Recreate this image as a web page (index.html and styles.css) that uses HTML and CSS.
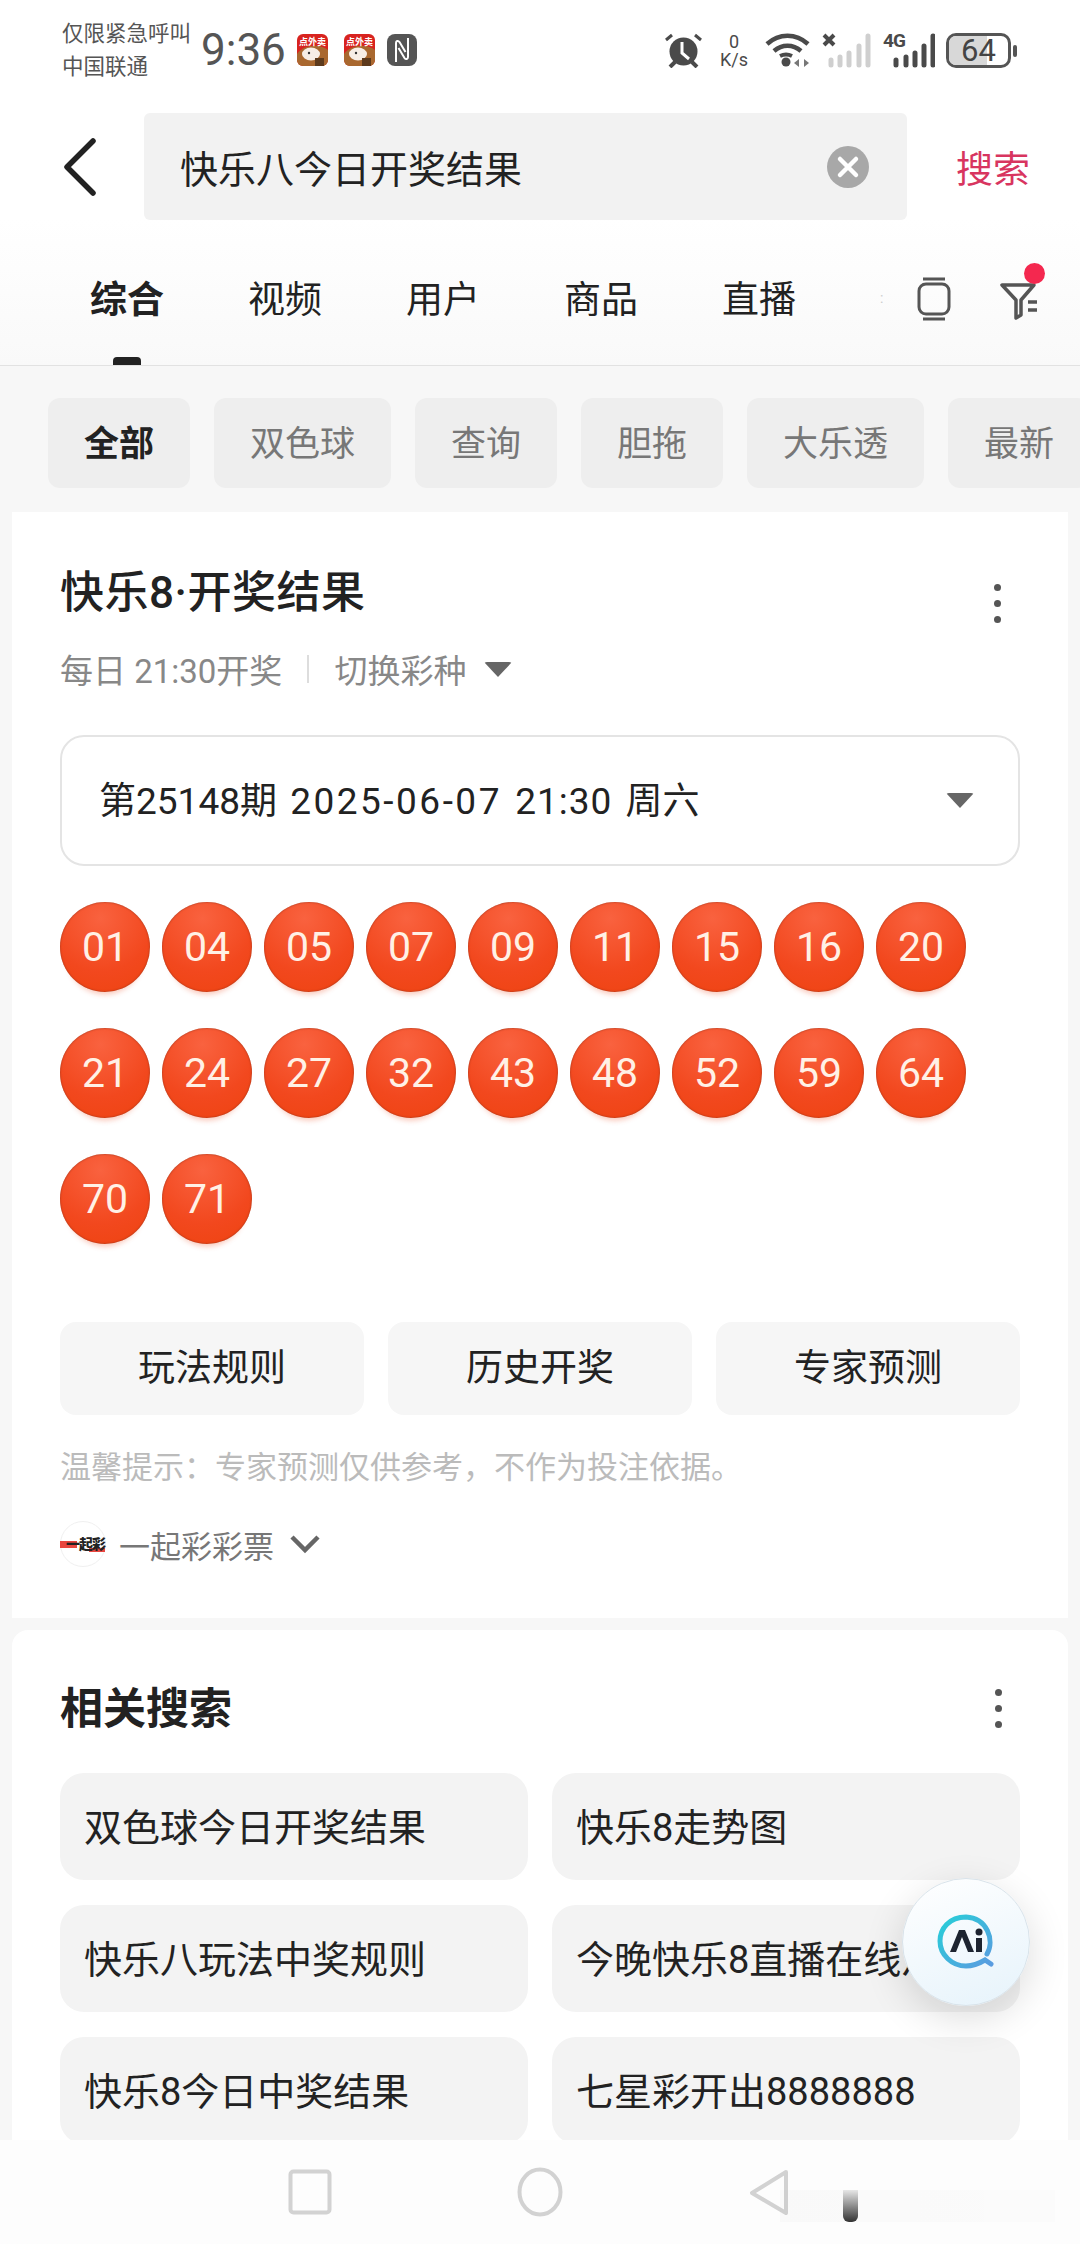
FILE: index.html
```html
<!DOCTYPE html>
<html lang="zh-CN">
<head>
    <meta charset="UTF-8">
    <meta name="viewport" content="width=device-width, initial-scale=1.0">
    <title>快乐八今日开奖结果</title>
    <link rel="stylesheet" href="styles.css">
</head>
<body>
    <div class="phone">
        <div class="top-area">
            <div class="status-bar">
                <div class="carrier">
                    <span>仅限紧急呼叫</span>
                    <span>中国联通</span>
                </div>
                <div class="clock">9:36</div>
                <svg class="app-icon" width="31" height="32" viewBox="0 0 31 32">
                    <rect width="31" height="32" rx="6" fill="#d8231f"/>
                    <path d="M0 20c6-9 22-11 31-4v10a6 6 0 0 1-6 6H6a6 6 0 0 1-6-6z" fill="#a9682f"/>
                    <ellipse cx="14" cy="20" rx="9" ry="6.5" fill="#f7eee6"/>
                    <rect x="18" y="24" width="9" height="8" fill="#5d3a1c"/>
                    <circle cx="12" cy="19" r="1.2" fill="#333"/>
                    <text x="15.5" y="11" text-anchor="middle" class="app-label">点外卖</text>
                </svg>
                <svg class="app-icon" width="31" height="32" viewBox="0 0 31 32">
                    <rect width="31" height="32" rx="6" fill="#d8231f"/>
                    <path d="M0 20c6-9 22-11 31-4v10a6 6 0 0 1-6 6H6a6 6 0 0 1-6-6z" fill="#a9682f"/>
                    <ellipse cx="14" cy="20" rx="9" ry="6.5" fill="#f7eee6"/>
                    <rect x="18" y="24" width="9" height="8" fill="#5d3a1c"/>
                    <circle cx="12" cy="19" r="1.2" fill="#333"/>
                    <text x="15.5" y="11" text-anchor="middle" class="app-label">点外卖</text>
                </svg>
                <svg class="nfc" width="30" height="32" viewBox="0 0 30 32">
                    <rect width="30" height="32" rx="8" fill="#555"/>
                    <path d="M9 28V9c0-2 2-3 3.500-1l6 10M21 4v19c0 2-2 3-3.500 1l-6-10" fill="none" stroke="#fff" stroke-width="2"/>
                </svg>
                <div class="status-right">
                    <svg width="37" height="35" viewBox="0 0 37 35">
                        <circle cx="18.500" cy="18.500" r="14" fill="#4a4a4a"/>
                        <path d="M17 9v11l7 6" fill="none" stroke="#fff" stroke-width="3"/>
                        <path d="M1 7l6-5M36 7l-6-5" stroke="#4a4a4a" stroke-width="3"/>
                        <path d="M5 34l5-5M32 34l-5-5" stroke="#4a4a4a" stroke-width="4"/>
                    </svg>
                    <div class="speed"><b>0</b><span>K/s</span></div>
                    <svg class="wifi" width="45" height="35" viewBox="0 0 45 35">
                        <path d="M2 11c12-11 29-11 41 0M9 18c8-7 19-7 27 0" fill="none" stroke="#4a4a4a" stroke-width="4.500"/>
                        <circle cx="21" cy="29" r="4.500" fill="#4a4a4a"/>
                        <path d="M15 23c4-2 8-2 12 0" fill="none" stroke="#4a4a4a" stroke-width="4"/>
                        <path d="M29 30l5-4v8zM39 26l5 4-5 4z" fill="#777"/>
                    </svg>
                    <svg class="no-sim" width="50" height="35" viewBox="0 0 50 35">
                        <path d="M2 2l10 10M12 2L2 12" stroke="#4a4a4a" stroke-width="4"/>
                        <g stroke="#cfcfcf" stroke-width="5" stroke-linecap="round">
                            <path d="M9 27v5M18 24v8M27 20v12M37 13v19M46 3v29"/>
                        </g>
                    </svg>
                    <div class="signal">
                        <span>4G</span>
                        <svg width="44" height="35" viewBox="0 0 44 35">
                            <g stroke="#4a4a4a" stroke-width="5" stroke-linecap="round">
                                <path d="M5 27v5M15 24v8M24 20v12M33 13v19M42 3v29"/>
                            </g>
                        </svg>
                    </div>
                    <div class="battery">
                        <div class="battery-body"><div class="battery-fill"></div><span>64</span></div>
                        <div class="battery-tip"></div>
                    </div>
                </div>
            </div>
            <div class="search-row">
                <svg class="back" width="36" height="60" viewBox="0 0 36 60">
                    <path d="M31 4L5 30l26 26" fill="none" stroke="#222" stroke-width="5.500" stroke-linecap="round" stroke-linejoin="round"/>
                </svg>
                <div class="search-box">
                    <span class="query">快乐八今日开奖结果</span>
                    <svg width="42" height="42" viewBox="0 0 42 42">
                        <circle cx="21" cy="21" r="21" fill="#a8a8a8"/>
                        <path d="M13 13l16 16M29 13L13 29" stroke="#fff" stroke-width="4.500" stroke-linecap="round"/>
                    </svg>
                </div>
                <div class="search-btn">搜索</div>
            </div>
            <div class="tabs">
                <div class="tab active">综合</div>
                <div class="tab">视频</div>
                <div class="tab">用户</div>
                <div class="tab">商品</div>
                <div class="tab">直播</div>
                <div class="tab-more">:</div>
                <div class="tab-tools">
                    <svg width="34" height="44" viewBox="0 0 34 44">
                        <rect x="2" y="7" width="30" height="30" rx="7" fill="none" stroke="#555" stroke-width="3"/>
                        <path d="M6 2h22M6 42h22" stroke="#555" stroke-width="3"/>
                    </svg>
                    <div class="filter">
                        <svg width="40" height="38" viewBox="0 0 40 38">
                            <path d="M2 3h32L21 18v15l-5 3V18z" fill="none" stroke="#555" stroke-width="3.500" stroke-linejoin="round"/>
                            <path d="M28 20h9M28 28h9" stroke="#555" stroke-width="3.500"/>
                        </svg>
                        <i class="red-dot"></i>
                    </div>
                </div>
            </div>
        </div>

        <div class="chips">
            <div class="chip active">全部</div>
            <div class="chip">双色球</div>
            <div class="chip">查询</div>
            <div class="chip">胆拖</div>
            <div class="chip">大乐透</div>
            <div class="chip">最新</div>
        </div>

        <div class="content">
            <div class="card result-card">
                <div class="card-head">
                    <h2>快乐8·开奖结果</h2>
                    <div class="dots"><i></i><i></i><i></i></div>
                </div>
                <div class="draw-time">
                    <span>每日 21:30开奖</span>
                    <em></em>
                    <span>切换彩种</span>
                    <i class="caret"></i>
                </div>
                <div class="period">
                    <span>第25148期 <span class="period-date">2025-06-07</span> <span class="period-time">21:30</span> 周六</span>
                    <i class="caret"></i>
                </div>
                <div class="balls">
                    <div class="ball">01</div><div class="ball">04</div><div class="ball">05</div>
                    <div class="ball">07</div><div class="ball">09</div><div class="ball">11</div>
                    <div class="ball">15</div><div class="ball">16</div><div class="ball">20</div>
                    <div class="ball">21</div><div class="ball">24</div><div class="ball">27</div>
                    <div class="ball">32</div><div class="ball">43</div><div class="ball">48</div>
                    <div class="ball">52</div><div class="ball">59</div><div class="ball">64</div>
                    <div class="ball">70</div><div class="ball">71</div>
                </div>
                <div class="actions">
                    <div class="action">玩法规则</div>
                    <div class="action">历史开奖</div>
                    <div class="action">专家预测</div>
                </div>
                <div class="tip">温馨提示：专家预测仅供参考，不作为投注依据。</div>
                <div class="source">
                    <div class="source-logo"><i></i><u></u><span>一起彩</span></div>
                    <span>一起彩彩票</span>
                    <svg width="32" height="20" viewBox="0 0 32 20">
                        <path d="M3 3l13 13L29 3" fill="none" stroke="#666" stroke-width="4.500"/>
                    </svg>
                </div>
            </div>

            <div class="card related-card">
                <div class="card-head">
                    <h2 class="bold">相关搜索</h2>
                    <div class="dots"><i></i><i></i><i></i></div>
                </div>
                <div class="related-grid">
                    <div class="related">双色球今日开奖结果</div>
                    <div class="related">快乐8走势图</div>
                    <div class="related">快乐八玩法中奖规则</div>
                    <div class="related">今晚快乐8直播在线从</div>
                    <div class="related">快乐8今日中奖结果</div>
                    <div class="related">七星彩开出8888888</div>
                </div>
            </div>

            <div class="fab">
                <svg width="58" height="56" viewBox="0 0 58 56">
                    <defs>
                        <linearGradient id="ring" x1="0" y1="0" x2="1" y2="1">
                            <stop offset="0" stop-color="#27cfd8"/>
                            <stop offset="1" stop-color="#5a9be0"/>
                        </linearGradient>
                    </defs>
                    <path d="M50 40C58 26 50 4 29 3 12 3 3 15 3 27c0 14 12 25 26 25 8 0 14-3 19-6l6 4" fill="none" stroke="url(#ring)" stroke-width="5" stroke-linecap="round"/>
                    <path d="M13 38l9-22h6l9 22h-6l-6-15-6 15z" fill="#1d2430"/>
                    <circle cx="42" cy="18" r="3.500" fill="#1d2430"/>
                    <rect x="39" y="24" width="6" height="14" fill="#1d2430"/>
                </svg>
            </div>
        </div>

        <div class="nav-bar">
            <svg width="44" height="46" viewBox="0 0 44 46">
                <rect x="2.500" y="2.500" width="39" height="41" rx="3" fill="none" stroke="#d2d2d2" stroke-width="4"/>
            </svg>
            <svg width="46" height="50" viewBox="0 0 46 50">
                <ellipse cx="23" cy="25" rx="20.500" ry="22.500" fill="none" stroke="#d2d2d2" stroke-width="4"/>
            </svg>
            <svg width="42" height="46" viewBox="0 0 42 46">
                <path d="M38 3L4 24l34 20z" fill="none" stroke="#d2d2d2" stroke-width="4" stroke-linejoin="round"/>
            </svg>
            <div class="nav-smear"><i></i></div>
        </div>
    </div>
</body>
</html>
```

FILE: styles.css
```css
* {
    box-sizing: border-box;
}

body {
    margin: 0;
    padding: 0;
    background-color: #f7f7f7;
    font-family: "Roboto", "Noto Sans CJK SC", sans-serif;
    color: #222;
}

.phone {
    width: 1080px;
    height: 2244px;
    display: flex;
    flex-direction: column;
    overflow: hidden;
}

.top-area {
    height: 366px;
    background: linear-gradient(#fff 60%, #f9f9f9);
    border-bottom: 1px solid #e2e2e2;
    flex-shrink: 0;
}

/* status bar */
.status-bar {
    height: 113px;
    padding: 17px 63px 0 62px;
    display: flex;
    align-items: flex-start;
    color: #555;
}

.carrier {
    display: flex;
    flex-direction: column;
    font-size: 21.5px;
    line-height: 33px;
    width: 139px;
}

.clock {
    font-size: 44px;
    line-height: 66px;
    width: 96px;
}

.app-icon {
    margin: 17px 16px 0 0;
}

.app-label {
    font-size: 9px;
    font-weight: 700;
    fill: #fff;
}

.nfc {
    margin: 17px 0 0 -4px;
}

.status-right {
    margin-left: auto;
    display: flex;
    align-items: center;
    height: 35px;
    margin-top: 16px;
}

.speed {
    display: flex;
    flex-direction: column;
    align-items: center;
    width: 32px;
    margin: 0 15px 0 16px;
    font-size: 18px;
    line-height: 18px;
    color: #4a4a4a;
}

.speed b {
    font-weight: 400;
    font-size: 18px;
}

.wifi {
    margin-right: 12px;
}

.no-sim {
    margin-right: 11px;
}

.signal {
    width: 52px;
    display: flex;
    align-items: flex-start;
    margin-right: 11px;
    position: relative;
    color: #4a4a4a;
}

.signal span {
    position: absolute;
    left: 0;
    top: -3px;
    font-size: 19px;
    font-weight: 700;
    line-height: 22px;
    letter-spacing: -1px;
}

.signal svg {
    margin-left: 8px;
}

.battery {
    display: flex;
    align-items: center;
    gap: 2px;
}

.battery-body {
    width: 65px;
    height: 35px;
    border: 3px solid #555;
    border-radius: 10px;
    position: relative;
    overflow: hidden;
    font-size: 31px;
    line-height: 30px;
    text-align: center;
    color: #444;
}

.battery-fill {
    position: absolute;
    left: 0;
    top: 0;
    bottom: 0;
    width: 64%;
    background-color: #d8d8d8;
}

.battery-body span {
    position: relative;
}

.battery-tip {
    width: 4px;
    height: 12px;
    border-radius: 2px;
    background-color: #555;
}

/* search */
.search-row {
    height: 107px;
    padding-left: 62px;
    display: flex;
    align-items: center;
}

.back {
    margin-right: 46px;
}

.search-box {
    width: 763px;
    height: 107px;
    padding: 0 38px 0 36px;
    border-radius: 6px;
    background-color: #f2f2f2;
    display: flex;
    align-items: center;
    justify-content: space-between;
}

.query {
    font-size: 38px;
}

.search-btn {
    margin-left: 49px;
    font-size: 37px;
    color: #d8355f;
}

/* tabs */
.tabs {
    height: 145px;
    padding-left: 90px;
    display: flex;
    align-items: flex-start;
}

.tab {
    width: 158px;
    padding-top: 53px;
    font-size: 37px;
    line-height: 56px;
    position: relative;
}

.tab.active {
    font-weight: 700;
}

.tab.active::after {
    content: "";
    position: absolute;
    left: 23px;
    top: 137px;
    width: 28px;
    height: 8px;
    border-radius: 4px 4px 0 0;
    background-color: #222;
}

.tab-more {
    width: 37px;
    padding-top: 68px;
    font-size: 14px;
    line-height: 20px;
    color: #ccc;
}

.tab-tools {
    padding-top: 57px;
    display: flex;
    align-items: flex-start;
    gap: 49px;
}

.filter {
    position: relative;
    height: 38px;
    margin-top: 5px;
}

.red-dot {
    position: absolute;
    left: 24px;
    top: -19px;
    width: 21px;
    height: 21px;
    border-radius: 50%;
    background-color: #f4284f;
}

/* chips */
.chips {
    padding: 32px 0 24px 48px;
    display: flex;
    gap: 24px;
    flex-shrink: 0;
}

.chip {
    padding: 0 36px;
    height: 90px;
    line-height: 94px;
    border-radius: 12px;
    background-color: #eeeeee;
    color: #777;
    font-size: 35px;
    white-space: nowrap;
}

.chip.active {
    font-weight: 700;
    color: #222;
}

/* cards */
.content {
    flex: 1;
    min-height: 0;
    padding: 0 12px;
    display: flex;
    flex-direction: column;
    gap: 12px;
    overflow: hidden;
    position: relative;
}

.card {
    background-color: #fff;
    padding: 0 48px;
    flex-shrink: 0;
}

.result-card {
    height: 1106px;
    padding-top: 50px;
}

.related-card {
    height: 600px;
    padding-top: 50px;
    border-radius: 16px 16px 0 0;
}

.card-head {
    display: flex;
    align-items: center;
    justify-content: space-between;
    height: 56px;
}

h2 {
    margin: 0 0 2px;
    font-size: 44px;
    font-weight: 500;
    letter-spacing: 0.5px;
}

h2.bold {
    font-weight: 700;
    font-size: 43px;
    letter-spacing: 0;
    margin: -6px 0 0;
}

.dots {
    display: flex;
    flex-direction: column;
    gap: 9px;
    margin-right: 18px;
}

.result-card .dots {
    margin-top: 26px;
    margin-right: 19px;
}

.dots i {
    width: 7px;
    height: 7px;
    border-radius: 50%;
    background-color: #555;
}

.draw-time {
    margin-top: 31px;
    height: 40px;
    display: flex;
    align-items: center;
    font-size: 33px;
    color: #888;
}

.draw-time em {
    width: 2px;
    height: 28px;
    margin: 0 25px;
    background-color: #ddd;
}

.caret {
    width: 0;
    height: 0;
    border-left: 14px solid transparent;
    border-right: 14px solid transparent;
    border-top: 15px solid #666;
    border-radius: 3px;
}

.draw-time .caret {
    margin-left: 18px;
}

.period {
    margin-top: 46px;
    height: 131px;
    padding: 0 44px 5px 37px;
    border: 2px solid #e4e4e4;
    border-radius: 24px;
    display: flex;
    align-items: center;
    justify-content: space-between;
    font-size: 37px;
    word-spacing: 4px;
}

.period .caret {
    margin-top: 5px;
}

.period-date {
    letter-spacing: 2.5px;
}

.period-time {
    letter-spacing: 1px;
}

.balls {
    margin-top: 36px;
    display: flex;
    flex-wrap: wrap;
    width: 918px;
    column-gap: 12px;
    row-gap: 36px;
}

.ball {
    width: 90px;
    height: 90px;
    border-radius: 50%;
    background: radial-gradient(circle at 45% 18%, #f9623f, #f2481e 60%, #ee4310);
    box-shadow: 0 10px 5px -7px rgba(240, 90, 50, 0.3), inset 0 0 2px rgba(120, 40, 20, 0.8);
    color: #fff1e6;
    font-size: 41px;
    line-height: 90px;
    text-align: center;
}

.actions {
    margin-top: 78px;
    display: flex;
    gap: 24px;
}

.action {
    flex: 1;
    height: 93px;
    line-height: 93px;
    border-radius: 16px;
    background-color: #f6f6f6;
    font-size: 37px;
    text-align: center;
}

.tip {
    margin-top: 32px;
    font-size: 31px;
    line-height: 42px;
    color: #bbb;
}

.source {
    margin-top: 32px;
    display: flex;
    align-items: center;
    font-size: 31px;
    color: #777;
}

.source-logo {
    width: 46px;
    height: 46px;
    margin-right: 13px;
    border: 1px solid #f0f0f0;
    border-radius: 50%;
    position: relative;
    font-size: 14px;
    font-weight: 900;
    line-height: 44px;
    letter-spacing: -1px;
    text-align: right;
    color: #222;
    white-space: nowrap;
}

.source-logo i {
    position: absolute;
    left: -1px;
    top: 19px;
    width: 17px;
    height: 7px;
    background-color: #e8463f;
}

.source-logo u {
    position: absolute;
    right: 0;
    top: 26px;
    width: 16px;
    height: 4px;
    background-color: #e8463f;
}

.source-logo span {
    position: relative;
}

.source svg {
    margin-left: 15px;
}

.related-grid {
    margin-top: 37px;
    display: grid;
    grid-template-columns: 468px 468px;
    column-gap: 24px;
    row-gap: 25px;
}

.related {
    height: 107px;
    padding-left: 24px;
    padding-right: 24px;
    line-height: 110px;
    border-radius: 24px;
    background-color: #f3f3f3;
    font-size: 38px;
    white-space: nowrap;
    overflow: hidden;
}

.fab {
    position: absolute;
    left: 902px;
    top: 1366px;
    width: 128px;
    height: 128px;
    border-radius: 50%;
    border: 1px solid #d9e3ea;
    background: linear-gradient(160deg, #fff, #e6f3fb);
    box-shadow: 0 12px 40px rgba(0, 0, 0, 0.14);
    display: flex;
    align-items: center;
    justify-content: center;
}

/* bottom bar */
.nav-bar {
    height: 104px;
    padding: 0 290px 0 288px;
    background-color: #fdfdfd;
    display: flex;
    align-items: center;
    justify-content: space-between;
    flex-shrink: 0;
    position: relative;
}

.nav-smear {
    position: absolute;
    left: 780px;
    top: 50px;
    width: 275px;
    height: 32px;
    background: linear-gradient(90deg, rgba(0, 0, 0, 0.015), rgba(0, 0, 0, 0.008));
}

.nav-smear i {
    position: absolute;
    left: 63px;
    top: 0;
    width: 15px;
    height: 32px;
    border-radius: 0 0 6px 6px;
    background: linear-gradient(rgba(60, 60, 60, 0.1), #333);
}
```
